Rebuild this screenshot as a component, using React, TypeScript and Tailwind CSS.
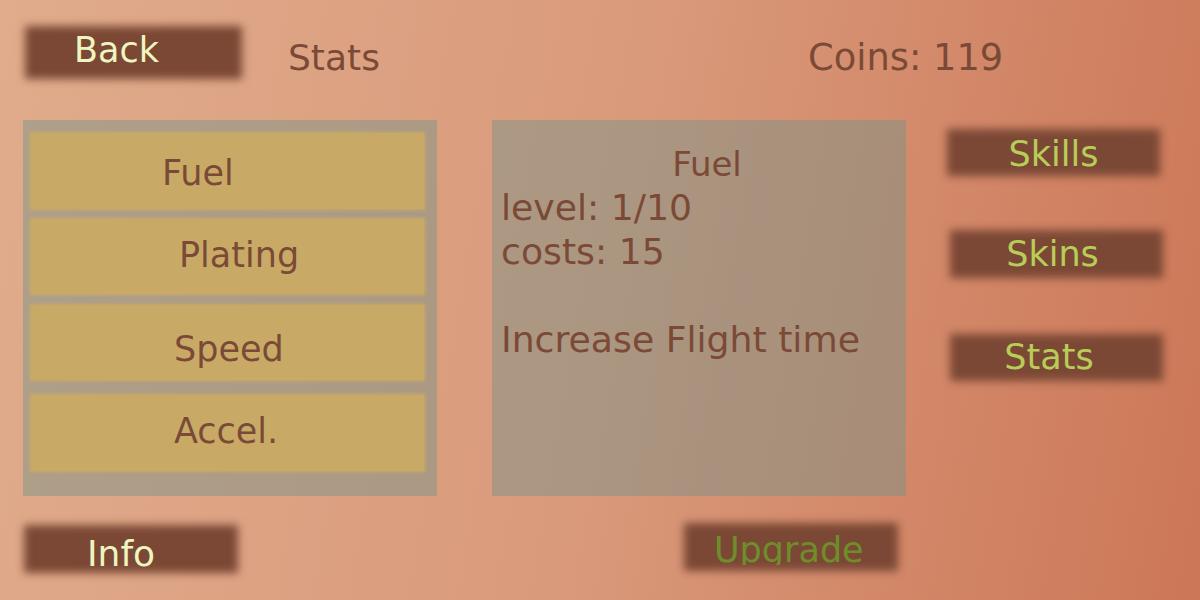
import React from 'react';

type BtnProps = {
  label: string;
  box: string;
  text: string;
  color: string;
};

// game-style button: blurred dark slab with text on top
function Btn({ label, box, text, color }: BtnProps) {
  return (
    <div className={`relative shrink-0 ${box}`}>
      <div className="absolute inset-0 bg-[#7b4835] blur-[4px]" />
      <div className={`relative flex text-[35px] leading-none ${text} ${color}`}>{label}</div>
    </div>
  );
}

const stats = [
  { name: 'Fuel', item: 'mt-[13px] h-[76px]', text: 'pt-[23px] pl-[131px]' },
  { name: 'Plating', item: 'mt-[10px] h-[75px]', text: 'pt-[19px] pl-[148px]' },
  { name: 'Speed', item: 'mt-[11px] h-[75px]', text: 'pt-[27px] pl-[143px]' },
  { name: 'Accel.', item: 'mt-[15px] h-[76px]', text: 'pt-[19px] pl-[143px]' },
];

export default function App() {
  return (
    <div className="w-[1200px] h-[600px] overflow-hidden flex flex-col bg-[linear-gradient(100deg,#e0ac8c_0%,#d99a7b_50%,#cc7757_100%)] font-['DejaVu_Sans','Liberation_Sans',sans-serif] text-[#7b4a37]">
      {/* top bar */}
      <div className="h-[120px] flex items-start shrink-0">
        <Btn
          label="Back"
          box="ml-[25px] mt-[26px] w-[217px] h-[53px]"
          text="pt-[7px] pl-[49px]"
          color="text-[#eef5c0]"
        />
        <div className="ml-[46px] mt-[40px] w-[430px] text-[36px] leading-none">Stats</div>
        <div className="ml-[90px] mt-[40px] text-[36.8px] leading-none">Coins: 119</div>
      </div>

      {/* panels */}
      <div className="h-[376px] flex items-start shrink-0">
        <div className="ml-[23px] w-[414px] h-[376px] flex flex-col bg-[#73938a]/45">
          {stats.map((s) => (
            <div
              key={s.name}
              className={`ml-[8px] w-[393px] bg-[#c8aa66] shadow-[0_0_3px_1px_#c8aa66] text-[35px] leading-none ${s.item}`}
            >
              <div className={s.text}>{s.name}</div>
            </div>
          ))}
        </div>

        <div className="ml-[55px] w-[414px] h-[376px] bg-[#73938a]/45 pl-[9px] pt-[23px]">
          <div className="text-center pl-[7px] text-[34px] leading-[43px]">Fuel</div>
          <div className="text-[36.2px] leading-[44px]">
            <div>level: 1/10</div>
            <div>costs: 15</div>
            <div className="h-[44px]" />
            <div>Increase Flight time</div>
          </div>
        </div>

        <div className="flex flex-col ml-[41px]">
          <Btn
            label="Skills"
            box="mt-[9px] w-[213px] h-[47px]"
            text="pt-[8px] justify-center"
            color="text-[#b8cd57]"
          />
          <Btn
            label="Skins"
            box="mt-[54px] ml-[3px] w-[213px] h-[48px]"
            text="pt-[7px] justify-center pr-[8px]"
            color="text-[#b8cd57]"
          />
          <Btn
            label="Stats"
            box="mt-[56px] ml-[3px] w-[213px] h-[47px]"
            text="pt-[6px] justify-center pr-[15px]"
            color="text-[#b8cd57]"
          />
        </div>
      </div>

      {/* bottom bar */}
      <div className="flex items-start">
        <Btn
          label="Info"
          box="ml-[24px] mt-[29px] w-[214px] h-[48px]"
          text="pt-[11px] pl-[63px] text-[36px]"
          color="text-[#eef5c0]"
        />
        <div className="relative shrink-0 ml-[446px] mt-[27px] w-[214px] h-[48px]">
          <div className="absolute inset-0 bg-[#7b4835] blur-[4px]" />
          <div className="relative h-[42px] overflow-hidden">
            <div className="pt-[10px] pl-[30px] text-[35px] leading-none text-[#6f8d2a]">Upgrade</div>
          </div>
        </div>
      </div>
    </div>
  );
}
